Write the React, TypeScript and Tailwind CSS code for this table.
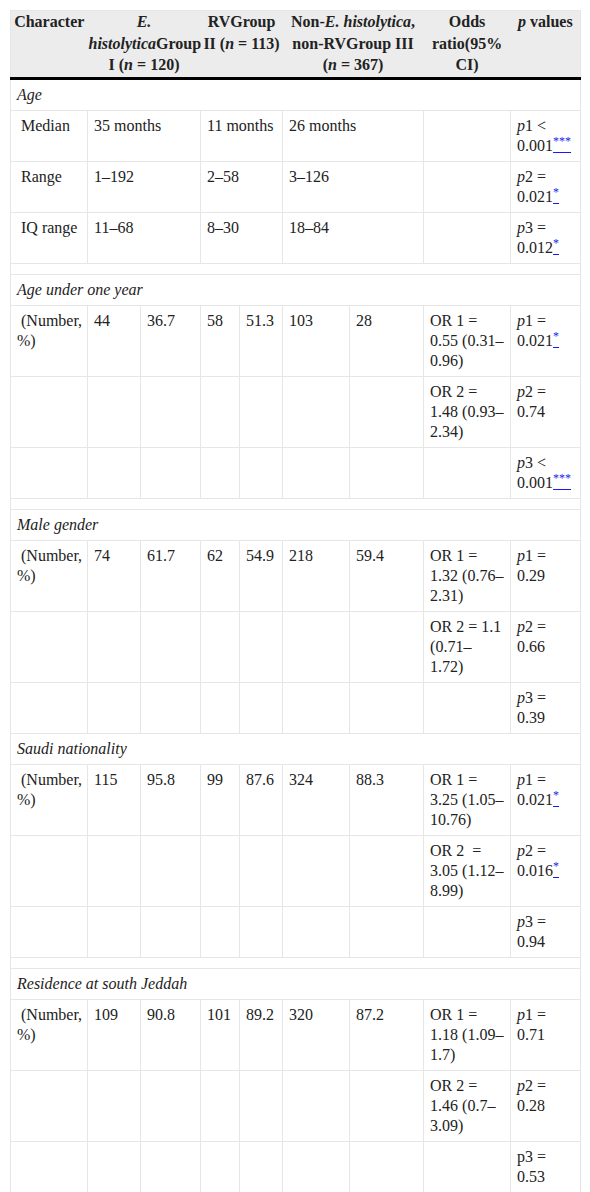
import type { ReactNode } from "react";

const td = "border border-[#e6e6e6] px-[6px] py-[5px] align-top";
const th =
  "bg-[#ececec] border-b-[3px] border-b-black px-[1px] pt-0 pb-[1px] align-top text-center font-bold leading-[21.5px]";

const Star = ({ n }: { n: number }) => (
  <a href="#" className="text-[#1a1aee] underline">
    <sup>{"*".repeat(n)}</sup>
  </a>
);

const P = ({ k, op = "=", v, star, plain }: { k: number; op?: string; v: string; star?: number; plain?: boolean }) => (
  <>
    {plain ? "p" : <i>p</i>}
    {k} {op} {v}
    {star ? <Star n={star} /> : null}
  </>
);

type Row = { vals?: string[]; or?: ReactNode; p: ReactNode };

const Section = ({ title, rows, spacer = true }: { title: string; rows: Row[]; spacer?: boolean }) => (
  <>
    <tr>
      <td colSpan={9} className={td + " italic"}>
        {title}
      </td>
    </tr>
    {rows.map((r, i) => (
      <tr key={i}>
        <td className={td}>
          {r.vals ? (
            <>
              &nbsp;(Number,
              <br />
              %)
            </>
          ) : null}
        </td>
        {r.vals ? r.vals.map((v, j) => <td key={j} className={td}>{v}</td>) : [0, 1, 2, 3, 4, 5].map((j) => <td key={j} className={td}></td>)}
        <td className={td}>{r.or}</td>
        <td className={td}>{r.p}</td>
      </tr>
    ))}
    {spacer && (
      <tr>
        <td colSpan={9} className={td}></td>
      </tr>
    )}
  </>
);

export default function App() {
  return (
    <div className="bg-white pt-[10px] px-[10px] text-[#222] text-[16px] leading-[20px]" style={{ fontFamily: '"Liberation Serif", "Times New Roman", serif' }}>
      <table className="w-[570px] table-fixed border-collapse border border-[#e6e6e6]">
        <colgroup>
          <col className="w-[77px]" />
          <col className="w-[53px]" />
          <col className="w-[60px]" />
          <col className="w-[39px]" />
          <col className="w-[43px]" />
          <col className="w-[67px]" />
          <col className="w-[74px]" />
          <col className="w-[87px]" />
          <col className="w-[70px]" />
        </colgroup>
        <thead>
          <tr>
            <th className={th}>Character</th>
            <th colSpan={2} className={th}>
              <i>E. histolytica</i>Group I (<i>n</i> = 120)
            </th>
            <th colSpan={2} className={th}>
              RVGroup II (<i>n</i> = 113)
            </th>
            <th colSpan={2} className={th}>
              Non-<i>E. histolytica</i>, non-RVGroup III (<i>n</i> = 367)
            </th>
            <th className={th}>Odds ratio(95% CI)</th>
            <th className={th}>
              <i>p</i> values
            </th>
          </tr>
        </thead>
        <tbody>
          <tr>
            <td colSpan={9} className={td + " italic"}>
              Age
            </td>
          </tr>
          <tr>
            <td className={td}>&nbsp;Median</td>
            <td colSpan={2} className={td}>35 months</td>
            <td colSpan={2} className={td}>11 months</td>
            <td colSpan={2} className={td}>26 months</td>
            <td className={td}></td>
            <td className={td}>
              <P k={1} op="<" v="0.001" star={3} />
            </td>
          </tr>
          <tr>
            <td className={td}>&nbsp;Range</td>
            <td colSpan={2} className={td}>1–192</td>
            <td colSpan={2} className={td}>2–58</td>
            <td colSpan={2} className={td}>3–126</td>
            <td className={td}></td>
            <td className={td}>
              <P k={2} v="0.021" star={1} />
            </td>
          </tr>
          <tr>
            <td className={td}>&nbsp;IQ range</td>
            <td colSpan={2} className={td}>11–68</td>
            <td colSpan={2} className={td}>8–30</td>
            <td colSpan={2} className={td}>18–84</td>
            <td className={td}></td>
            <td className={td}>
              <P k={3} v="0.012" star={1} />
            </td>
          </tr>
          <tr>
            <td colSpan={9} className={td}></td>
          </tr>
          <Section
            title="Age under one year"
            rows={[
              { vals: ["44", "36.7", "58", "51.3", "103", "28"], or: "OR 1 = 0.55 (0.31–0.96)", p: <P k={1} v="0.021" star={1} /> },
              { or: "OR 2 = 1.48 (0.93–2.34)", p: <P k={2} v="0.74" /> },
              { p: <P k={3} op="<" v="0.001" star={3} /> },
            ]}
          />
          <Section
            title="Male gender"
            spacer={false}
            rows={[
              { vals: ["74", "61.7", "62", "54.9", "218", "59.4"], or: "OR 1 = 1.32 (0.76–2.31)", p: <P k={1} v="0.29" /> },
              { or: "OR 2 = 1.1 (0.71–1.72)", p: <P k={2} v="0.66" /> },
              { p: <P k={3} v="0.39" /> },
            ]}
          />
          <Section
            title="Saudi nationality"
            rows={[
              { vals: ["115", "95.8", "99", "87.6", "324", "88.3"], or: "OR 1 = 3.25 (1.05–10.76)", p: <P k={1} v="0.021" star={1} /> },
              { or: "OR 2\u00a0 = 3.05 (1.12–8.99)", p: <P k={2} v="0.016" star={1} /> },
              { p: <P k={3} v="0.94" /> },
            ]}
          />
          <Section
            title="Residence at south Jeddah"
            spacer={false}
            rows={[
              { vals: ["109", "90.8", "101", "89.2", "320", "87.2"], or: "OR 1 = 1.18 (1.09–1.7)", p: <P k={1} v="0.71" /> },
              { or: "OR 2 = 1.46 (0.7–3.09)", p: <P k={2} v="0.28" /> },
              { p: <P k={3} v="0.53" plain /> },
            ]}
          />
        </tbody>
      </table>
    </div>
  );
}
